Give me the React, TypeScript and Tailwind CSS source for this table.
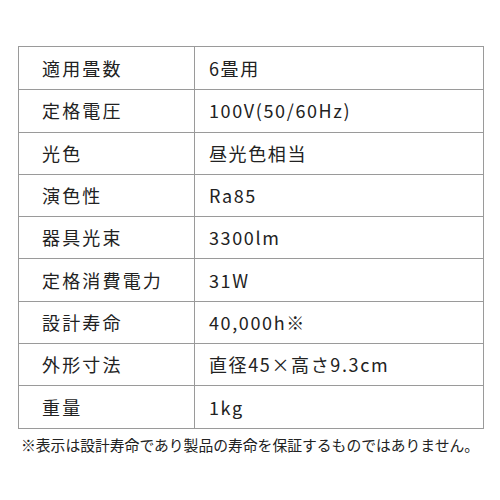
import React from 'react';

const rows: [string, string][] = [
  ['適用畳数', '6畳用'],
  ['定格電圧', '100V(50/60Hz)'],
  ['光色', '昼光色相当'],
  ['演色性', 'Ra85'],
  ['器具光束', '3300lm'],
  ['定格消費電力', '31W'],
  ['設計寿命', '40,000h※'],
  ['外形寸法', '直径45×高さ9.3cm'],
  ['重量', '1kg'],
];

export default function App() {
  return (
    <div
      className="w-[500px] h-[500px] bg-white pt-[46px] pl-[18px] text-[#222]"
      style={{ fontFamily: '"Noto Sans CJK JP", "Noto Sans", sans-serif' }}
    >
      <div className="w-[466px] border border-[#9a9a9a]">
        {rows.map(([label, value], i) => (
          <div
            key={label}
            className={`flex h-[42.3px] items-center ${i > 0 ? 'border-t border-[#9a9a9a]' : ''}`}
          >
            <div className="w-[176px] h-full flex items-center pl-[23px] border-r border-[#9a9a9a] text-[18px] tracking-[0.12em]">
              {label}
            </div>
            <div className="flex-1 pl-[14px] text-[18px] tracking-[0.09em]">{value}</div>
          </div>
        ))}
      </div>
      <div className="mt-[5px] ml-[3px] text-[14.8px] leading-[22px] whitespace-nowrap">
        ※表示は設計寿命であり製品の寿命を保証するものではありません。
      </div>
    </div>
  );
}
